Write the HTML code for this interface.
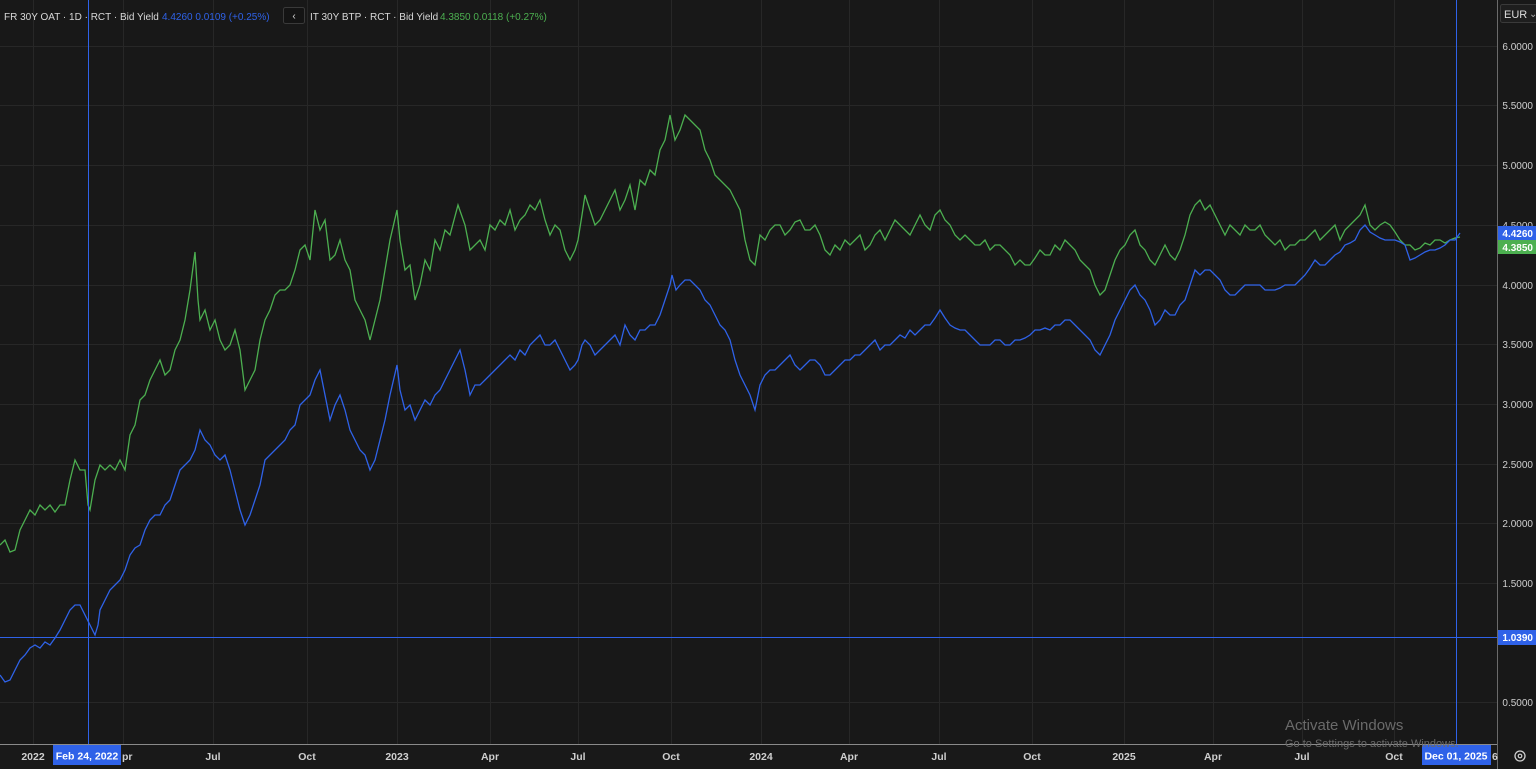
<!DOCTYPE html>
<html><head><meta charset="utf-8"><style>
html,body{margin:0;padding:0;background:#181818;overflow:hidden}
svg{display:block}
text{font-family:"Liberation Sans",sans-serif}
</style></head><body>
<svg width="1536" height="769" viewBox="0 0 1536 769" xmlns="http://www.w3.org/2000/svg">
<rect width="1536" height="769" fill="#181818"/>
<g stroke="#272727" stroke-width="1">
<line x1="0" y1="46.5" x2="1497" y2="46.5"/><line x1="0" y1="105.5" x2="1497" y2="105.5"/><line x1="0" y1="165.5" x2="1497" y2="165.5"/><line x1="0" y1="225.5" x2="1497" y2="225.5"/><line x1="0" y1="285.5" x2="1497" y2="285.5"/><line x1="0" y1="344.5" x2="1497" y2="344.5"/><line x1="0" y1="404.5" x2="1497" y2="404.5"/><line x1="0" y1="464.5" x2="1497" y2="464.5"/><line x1="0" y1="523.5" x2="1497" y2="523.5"/><line x1="0" y1="583.5" x2="1497" y2="583.5"/><line x1="0" y1="702.5" x2="1497" y2="702.5"/>
<line x1="33.5" y1="0" x2="33.5" y2="744"/><line x1="123.5" y1="0" x2="123.5" y2="744"/><line x1="213.5" y1="0" x2="213.5" y2="744"/><line x1="307.5" y1="0" x2="307.5" y2="744"/><line x1="397.5" y1="0" x2="397.5" y2="744"/><line x1="490.5" y1="0" x2="490.5" y2="744"/><line x1="578.5" y1="0" x2="578.5" y2="744"/><line x1="671.5" y1="0" x2="671.5" y2="744"/><line x1="761.5" y1="0" x2="761.5" y2="744"/><line x1="849.5" y1="0" x2="849.5" y2="744"/><line x1="939.5" y1="0" x2="939.5" y2="744"/><line x1="1032.5" y1="0" x2="1032.5" y2="744"/><line x1="1124.5" y1="0" x2="1124.5" y2="744"/><line x1="1213.5" y1="0" x2="1213.5" y2="744"/><line x1="1302.5" y1="0" x2="1302.5" y2="744"/><line x1="1394.5" y1="0" x2="1394.5" y2="744"/>
</g>
<polyline fill="none" stroke="#4caf50" stroke-width="1.3" points="0,545 5,540 10,552 15,550 20,530 25,520 30,510 35,515 40,505 45,510 50,505 55,512 60,505 65,505 70,480 75,460 80,470 85,470 88,505 90,510 95,480 100,465 105,470 110,465 115,470 120,460 125,470 130,435 135,425 140,400 145,395 150,380 155,370 160,360 165,375 170,370 175,350 180,340 185,320 190,290 195,252 198,300 200,320 205,310 210,330 215,320 220,340 225,350 230,345 235,330 240,350 245,390 250,380 255,370 260,340 265,320 270,310 275,295 280,290 285,290 290,285 295,270 300,250 305,245 310,260 315,210 320,230 325,220 330,260 335,255 340,240 345,260 350,270 355,300 360,310 365,320 370,340 375,320 380,300 385,270 390,240 397,210 400,240 405,270 410,265 415,300 420,285 425,260 430,270 435,240 440,250 445,230 450,235 458,205 465,225 470,250 475,245 480,240 485,250 490,225 495,230 500,220 505,225 510,210 515,230 520,220 525,215 530,205 535,210 540,200 545,220 550,235 555,225 560,230 565,250 570,260 575,250 578,240 582,215 585,195 590,210 595,225 600,220 605,210 610,200 615,190 620,210 625,200 630,185 635,210 640,180 645,185 650,170 655,175 660,150 665,140 670,115 675,140 680,130 685,115 690,120 695,125 700,130 705,150 710,160 715,175 720,180 725,185 730,190 735,200 740,210 745,240 750,260 755,265 760,235 765,240 770,230 775,225 780,225 785,235 790,230 795,222 800,220 805,230 810,230 815,225 820,235 825,250 830,255 835,245 840,250 845,240 850,245 855,240 860,235 865,250 870,245 875,235 880,230 885,240 890,230 895,220 900,225 905,230 910,235 915,225 920,215 925,225 930,230 935,215 940,210 945,220 950,225 955,235 960,240 965,235 970,240 975,245 980,245 985,240 990,250 995,245 1000,245 1005,250 1010,255 1015,265 1020,260 1025,265 1030,265 1035,258 1040,250 1045,255 1050,255 1055,245 1060,250 1065,240 1070,245 1075,250 1080,260 1085,265 1090,270 1095,285 1100,295 1105,290 1110,275 1115,260 1120,250 1125,245 1130,235 1135,230 1140,245 1145,250 1150,260 1155,265 1160,255 1165,245 1170,255 1175,260 1180,250 1185,235 1190,215 1195,205 1200,200 1205,210 1210,205 1215,215 1220,225 1225,235 1230,225 1235,230 1240,235 1245,225 1250,230 1255,230 1260,225 1265,235 1270,240 1275,245 1280,240 1285,250 1290,245 1295,245 1300,240 1305,240 1310,235 1315,230 1320,240 1325,235 1330,230 1335,225 1340,240 1345,230 1350,225 1355,220 1360,215 1365,205 1370,225 1375,230 1380,225 1385,222 1390,225 1395,232 1400,240 1405,245 1410,245 1415,250 1420,248 1425,243 1430,245 1435,240 1440,240 1445,243 1450,240 1455,238 1460,237"/>
<polyline fill="none" stroke="#2f62e8" stroke-width="1.3" points="0,675 5,682 10,680 15,670 20,660 25,655 30,648 35,645 40,648 45,642 50,645 55,638 60,630 65,620 70,610 75,605 80,605 85,615 90,625 95,635 98,625 100,610 105,600 110,590 115,585 120,580 125,570 130,555 135,548 140,545 145,530 150,520 155,515 160,515 165,505 170,500 175,485 180,470 185,465 190,460 195,450 200,430 205,440 210,445 215,455 220,460 225,455 230,470 235,490 240,510 245,525 250,515 255,500 260,485 265,460 270,455 275,450 280,445 285,440 290,430 295,425 300,405 305,400 310,395 315,380 320,370 325,395 330,420 335,405 340,395 345,410 350,430 355,440 360,450 365,455 370,470 375,460 380,440 385,420 390,395 397,365 400,390 405,410 410,405 415,420 420,410 425,400 430,405 435,395 440,390 445,380 450,370 455,360 460,350 465,370 470,395 475,385 480,385 485,380 490,375 495,370 500,365 505,360 510,355 515,360 520,350 525,355 530,345 535,340 540,335 545,345 550,345 555,340 560,350 565,360 570,370 575,365 578,360 582,345 585,340 590,345 595,355 600,350 605,345 610,340 615,335 620,345 625,325 630,335 635,340 640,330 645,330 650,325 655,325 660,315 665,300 670,285 672,275 676,290 680,285 685,280 690,280 695,285 700,290 705,300 710,305 715,315 720,325 725,330 730,340 735,360 740,375 745,385 750,395 755,410 760,385 765,375 770,370 775,370 780,365 785,360 790,355 795,365 800,370 805,365 810,360 815,360 820,365 825,375 830,375 835,370 840,365 845,360 850,360 855,355 860,355 865,350 870,345 875,340 880,350 885,345 890,345 895,340 900,335 905,338 910,330 915,335 920,330 925,325 930,325 935,318 940,310 945,318 950,325 955,328 960,330 965,330 970,335 975,340 980,345 985,345 990,345 995,340 1000,340 1005,345 1010,345 1015,340 1020,340 1025,338 1030,335 1035,330 1040,330 1045,328 1050,330 1055,325 1060,325 1065,320 1070,320 1075,325 1080,330 1085,335 1090,340 1095,350 1100,355 1105,345 1110,335 1115,320 1120,310 1125,300 1130,290 1135,285 1140,295 1145,300 1150,310 1155,325 1160,320 1165,310 1170,315 1175,315 1180,305 1185,300 1190,285 1195,270 1200,275 1205,270 1210,270 1215,275 1220,280 1225,290 1230,295 1235,295 1240,290 1245,285 1250,285 1255,285 1260,285 1265,290 1270,290 1275,290 1280,288 1285,285 1290,285 1295,285 1300,280 1305,275 1310,268 1315,260 1320,265 1325,265 1330,260 1335,255 1340,252 1345,245 1350,243 1355,240 1360,230 1365,225 1370,232 1375,235 1380,238 1385,240 1390,240 1395,240 1400,242 1405,245 1410,260 1415,258 1420,255 1425,252 1430,250 1435,250 1440,248 1445,245 1450,240 1455,240 1460,233"/>
<line x1="88.5" y1="0" x2="88.5" y2="744" stroke="#2f62e8" stroke-width="1"/>
<line x1="1456.5" y1="0" x2="1456.5" y2="744" stroke="#2f62e8" stroke-width="1"/>
<line x1="0" y1="637.5" x2="1497" y2="637.5" stroke="#2f62e8" stroke-width="1"/>
<line x1="0" y1="744.5" x2="1497" y2="744.5" stroke="#8a8a8a" stroke-width="1"/>
<line x1="1497.5" y1="0" x2="1497.5" y2="769" stroke="#6a6a6a" stroke-width="1"/>
<rect x="0" y="745" width="1497" height="24" fill="#191919"/>
<g font-size="10.5" fill="#cfcfcf" text-anchor="middle" font-weight="bold">
<text x="33" y="760">2022</text><text x="213" y="760">Jul</text><text x="307" y="760">Oct</text><text x="397" y="760">2023</text><text x="490" y="760">Apr</text><text x="578" y="760">Jul</text><text x="671" y="760">Oct</text><text x="761" y="760">2024</text><text x="849" y="760">Apr</text><text x="939" y="760">Jul</text><text x="1032" y="760">Oct</text><text x="1124" y="760">2025</text><text x="1213" y="760">Apr</text><text x="1302" y="760">Jul</text><text x="1394" y="760">Oct</text>
</g>
<text x="122" y="760" font-size="10.5" fill="#cfcfcf" font-weight="bold">pr</text>
<rect x="53" y="745" width="68" height="20" fill="#2f62e8"/>
<text x="87" y="759.5" font-size="10.5" fill="#fff" text-anchor="middle" font-weight="bold">Feb 24, 2022</text>
<rect x="1422" y="745" width="69" height="20" fill="#2f62e8"/>
<text x="1456" y="759.5" font-size="10.5" fill="#fff" text-anchor="middle" font-weight="bold">Dec 01, 2025</text>
<text x="1492" y="760" font-size="10.5" fill="#cfcfcf" font-weight="bold">6</text>
<circle cx="1520" cy="756" r="5" fill="none" stroke="#cfcfcf" stroke-width="1.3"/><circle cx="1520" cy="756" r="1.8" fill="none" stroke="#cfcfcf" stroke-width="1.2"/>
<g font-size="10" fill="#cfcfcf" text-anchor="end">
<text x="1533" y="50">6.0000</text><text x="1533" y="109">5.5000</text><text x="1533" y="169">5.0000</text><text x="1533" y="229">4.5000</text><text x="1533" y="289">4.0000</text><text x="1533" y="348">3.5000</text><text x="1533" y="408">3.0000</text><text x="1533" y="468">2.5000</text><text x="1533" y="527">2.0000</text><text x="1533" y="587">1.5000</text><text x="1533" y="706">0.5000</text>
</g>
<rect x="1498" y="226" width="38" height="14" fill="#2f62e8"/>
<text x="1533" y="237" font-size="10" fill="#fff" text-anchor="end" font-weight="bold">4.4260</text>
<rect x="1498" y="240" width="38" height="14" fill="#4caf50"/>
<text x="1533" y="251" font-size="10" fill="#fff" text-anchor="end" font-weight="bold">4.3850</text>
<rect x="1498" y="630" width="38" height="15" fill="#2f62e8"/>
<text x="1533" y="641" font-size="10" fill="#fff" text-anchor="end" font-weight="bold">1.0390</text>
<rect x="1500.5" y="4.5" width="40" height="18" rx="2" fill="#1e1e1e" stroke="#3a3a3a"/>
<text x="1504" y="18" font-size="11" fill="#ddd">EUR</text>
<text x="1529" y="17" font-size="10" fill="#aaa">⌄</text>
<g font-size="10">
<text x="4" y="20" fill="#d8d8d8">FR 30Y OAT · 1D · RCT · Bid Yield</text>
<text x="162" y="20" fill="#2f62e8">4.4260  0.0109 (+0.25%)</text>
<rect x="283.5" y="7.5" width="21" height="16" rx="2" fill="#141414" stroke="#3a3a3a"/>
<text x="294" y="19" fill="#ddd" text-anchor="middle" font-size="10">‹</text>
<text x="310" y="20" fill="#d8d8d8">IT 30Y BTP · RCT · Bid Yield</text>
<text x="440" y="20" fill="#4caf50">4.3850  0.0118 (+0.27%)</text>
</g>
<text x="1285" y="730" font-size="15" fill="#6a6a6a">Activate Windows</text>
<text x="1285" y="747" font-size="11" fill="#6a6a6a">Go to Settings to activate Windows.</text>
</svg>
</body></html>
